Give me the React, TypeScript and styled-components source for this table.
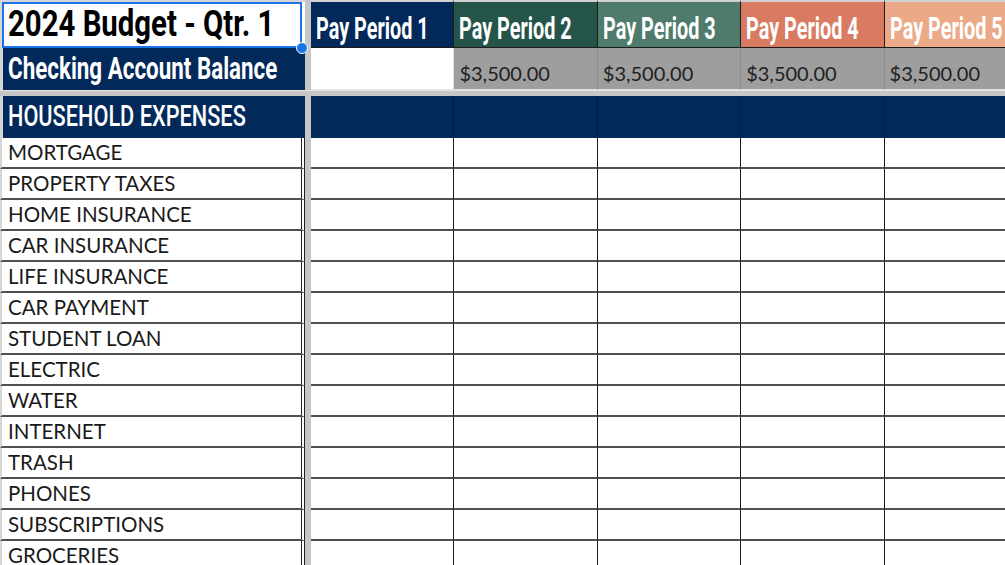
import React from "react";
import styled, { createGlobalStyle } from "styled-components";

const NAVY = "#02295a";
const BLUE = "#1a73e8";
const COLS = "305px 6px repeat(5, 143.4px)";

const periods = [
  { label: "Pay Period 1", bg: NAVY, balance: "" },
  { label: "Pay Period 2", bg: "#245548", balance: "$3,500.00" },
  { label: "Pay Period 3", bg: "#4f7b6c", balance: "$3,500.00" },
  { label: "Pay Period 4", bg: "#d97b60", balance: "$3,500.00" },
  { label: "Pay Period 5", bg: "#eca987", balance: "$3,500.00" },
];

const expenses = [
  "MORTGAGE",
  "PROPERTY TAXES",
  "HOME INSURANCE",
  "CAR INSURANCE",
  "LIFE INSURANCE",
  "CAR PAYMENT",
  "STUDENT LOAN",
  "ELECTRIC",
  "WATER",
  "INTERNET",
  "TRASH",
  "PHONES",
  "SUBSCRIPTIONS",
  "GROCERIES",
];

const App: React.FC = () => {
  return (
    <>
      <GlobalStyle />
      <Sheet>
        <Row $h={48}>
          <TitleCell>
            <TitleBox>
              <Title $sx={0.815}>2024 Budget - Qtr. 1</Title>
              <Handle />
            </TitleBox>
          </TitleCell>
          <FreezeCol />
          {periods.map((p) => (
            <HeaderCell key={p.label} $bg={p.bg}>
              <HeaderText $sx={0.64}>{p.label}</HeaderText>
            </HeaderCell>
          ))}
        </Row>
        <Row $h={42}>
          <NavyLabel $pb={6}>
            <HeaderText $sx={0.722}>Checking Account Balance</HeaderText>
          </NavyLabel>
          <FreezeCol />
          {periods.map((p) => (
            <BalanceCell key={p.label} $filled={p.balance !== ""}>
              {p.balance}
            </BalanceCell>
          ))}
        </Row>
        <FreezeRow />
        <Row $h={42}>
          <NavyLabel $pb={7}>
            <SectionText $sx={0.724}>HOUSEHOLD EXPENSES</SectionText>
          </NavyLabel>
          <FreezeCol />
          {periods.map((p) => (
            <NavyCell key={p.label} />
          ))}
        </Row>
        {expenses.map((name) => (
          <Row $h={31} key={name}>
            <LabelCell>{name}</LabelCell>
            <FreezeCol />
            {periods.map((p) => (
              <DataCell key={p.label} />
            ))}
          </Row>
        ))}
      </Sheet>
    </>
  );
};

export default App;

const GlobalStyle = createGlobalStyle`
  html, body {
    margin: 0;
    padding: 0;
    background: #fff;
  }
  body {
    width: 1005px;
    height: 565px;
    overflow: hidden;
  }
`;

const Sheet = styled.div`
  width: 1005px;
  height: 565px;
  overflow: hidden;
  display: flex;
  flex-direction: column;
  background: #fff;
  font-family: Lato, "Open Sans", sans-serif;
`;

const Row = styled.div<{ $h: number }>`
  display: grid;
  grid-template-columns: ${COLS};
  height: ${(p) => p.$h}px;
  flex: none;
`;

const FreezeCol = styled.div`
  background: #c6c6c6;
`;

const FreezeRow = styled.div`
  height: 5px;
  flex: none;
  background: #c6c6c6;
  border-top: 1px solid #e2e2e2;
`;

/* squeezed Roboto stands in for the narrow display face */
const Condensed = styled.span<{ $sx: number }>`
  display: inline-block;
  font-family: Roboto, "Liberation Sans", sans-serif;
  font-weight: 700;
  line-height: 1;
  white-space: nowrap;
  transform: scaleX(${(p) => p.$sx});
  transform-origin: left bottom;
`;

const Title = styled(Condensed)`
  font-size: 36px;
  color: #000;
`;

const HeaderText = styled(Condensed)`
  font-size: 31px;
  color: #fff;
`;

const SectionText = styled(Condensed)`
  font-size: 30px;
  font-weight: 500;
  color: #fff;
`;

const TitleCell = styled.div`
  border-left: 2px solid #d6d6d6;
  border-top: 2px solid #d6d6d6;
  padding-right: 3px;
  display: flex;
  min-width: 0;
`;

const TitleBox = styled.div`
  position: relative;
  flex: 1;
  min-width: 0;
  border: 2px solid ${BLUE};
  display: flex;
  align-items: flex-end;
  padding: 0 0 4px 4px;
`;

const Handle = styled.span`
  position: absolute;
  right: -7.5px;
  bottom: -7.5px;
  width: 10px;
  height: 10px;
  border-radius: 50%;
  background: ${BLUE};
  border: 1.5px solid #fff;
  z-index: 2;
`;

const HeaderCell = styled.div<{ $bg: string }>`
  background: ${(p) => p.$bg};
  border-top: 2px solid #d2d2d2;
  border-right: 1px solid #1c1c1c;
  border-bottom: 1px solid #1c1c1c;
  display: flex;
  align-items: flex-end;
  padding: 0 0 3px 5px;
  min-width: 0;
  overflow: hidden;
`;

const NavyLabel = styled.div<{ $pb: number }>`
  border-left: 3px solid #d6d6d6;
  background: ${NAVY};
  display: flex;
  align-items: flex-end;
  padding: 0 0 ${(p) => p.$pb}px 5px;
  min-width: 0;
  overflow: hidden;
`;

const BalanceCell = styled.div<{ $filled: boolean }>`
  background: ${(p) => (p.$filled ? "#9e9e9e" : "#fff")};
  border-right: 1px solid ${(p) => (p.$filled ? "#8e8e8e" : "#e0e0e0")};
  border-bottom: 1px solid #e4e4e4;
  display: flex;
  align-items: flex-end;
  padding: 0 0 6px 5px;
  font-size: 20px;
  color: #222;
  line-height: 1;
`;

const NavyCell = styled.div`
  background: ${NAVY};
  border-right: 1px solid #011c3f;
`;

const LabelCell = styled.div`
  border-left: 2px solid #d6d6d6;
  border-right: 4px double #222;
  border-bottom: 2px solid #505050;
  display: flex;
  align-items: center;
  padding-left: 6px;
  font-size: 20.5px;
  line-height: 1;
  color: #1a1a1a;
  white-space: nowrap;
`;

const DataCell = styled.div`
  border-right: 1px solid #1a1a1a;
  border-bottom: 2px solid #505050;
`;
